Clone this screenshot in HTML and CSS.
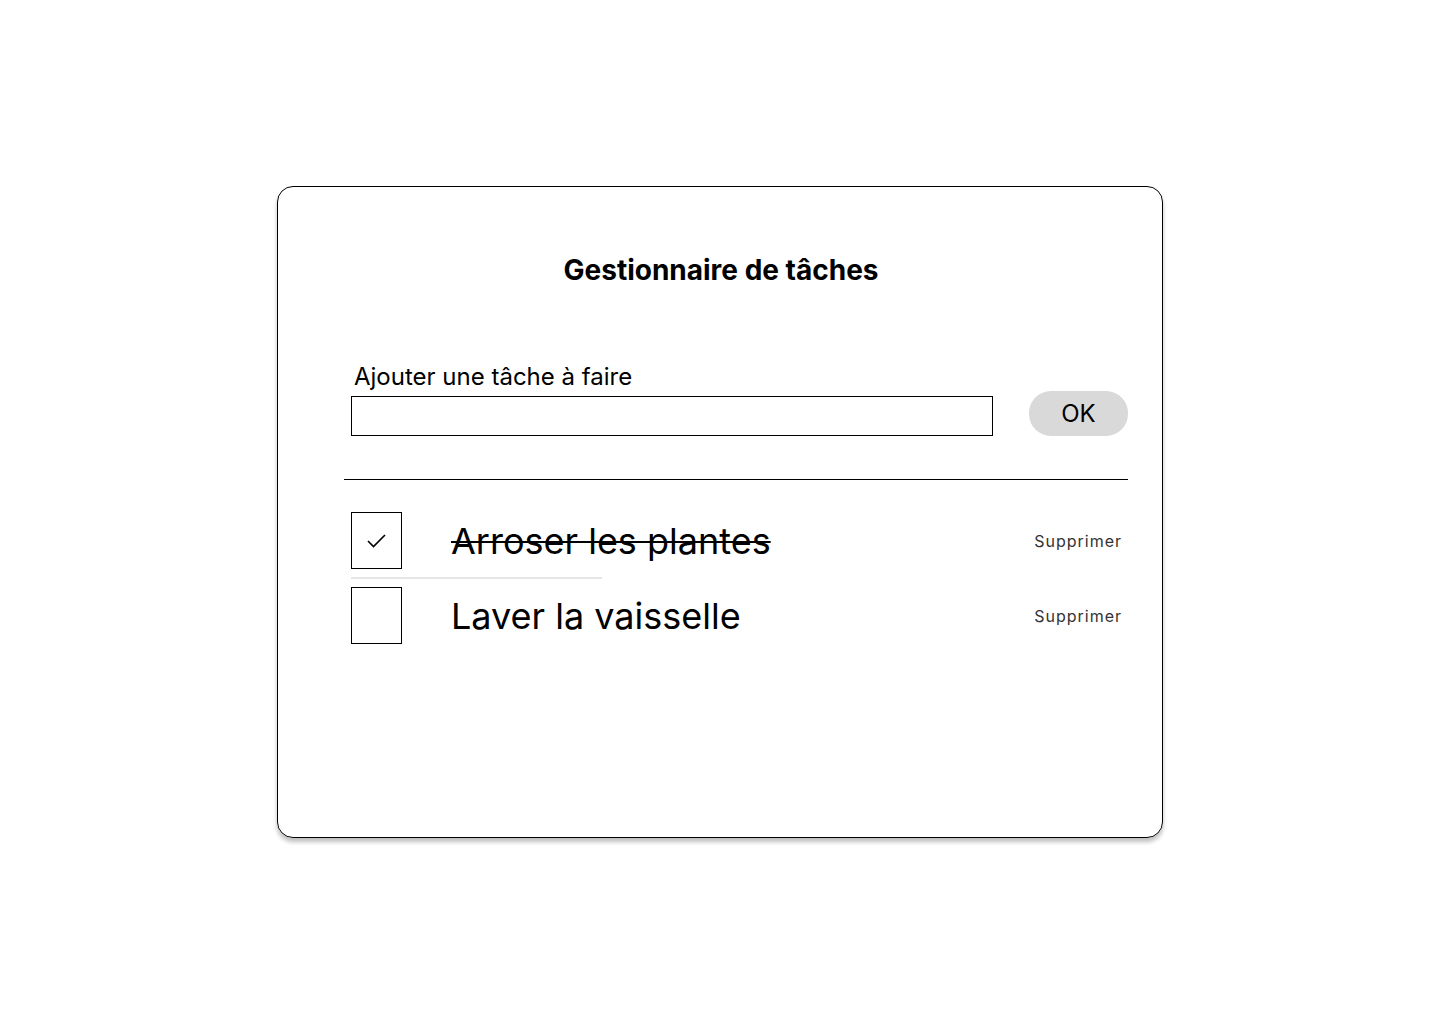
FILE: index.html
```html
<!DOCTYPE html>
<html lang="fr">
<head>
<meta charset="utf-8">
<title>Gestionnaire de tâches</title>
<link rel="stylesheet" href="styles.css">
</head>
<body>
<main class="card">
  <h1 class="title">Gestionnaire de tâches</h1>
  <form class="add-form">
    <div class="field">
      <label class="label" for="task">Ajouter une tâche à faire</label>
      <input class="input" id="task" type="text">
    </div>
    <button class="ok-btn" type="button">OK</button>
  </form>
  <hr class="divider">
  <ul class="tasks">
    <li class="task">
      <span class="check checked">
        <svg width="19" height="14" viewBox="0 0 19 14" fill="none"><path d="M1 7 L6.5 12.5 L18 1" stroke="#000" stroke-width="1.6"/></svg>
      </span>
      <span class="task-text done">Arroser les plantes</span>
      <span class="delete">Supprimer</span>
    </li>
    <li class="sep"></li>
    <li class="task">
      <span class="check"></span>
      <span class="task-text">Laver la vaisselle</span>
      <span class="delete">Supprimer</span>
    </li>
  </ul>
</main>
</body>
</html>
```

FILE: styles.css
```css
* { box-sizing: border-box; }
html, body { margin: 0; padding: 0; background: #fff; }
body {
  height: 100vh;
  display: flex;
  align-items: center;
  justify-content: center;
  font-family: Inter, "Noto Sans", sans-serif;
  color: #000;
}
.card {
  width: 886px;
  height: 652px;
  border: 1px solid #000;
  border-radius: 16px;
  box-shadow: 0 4px 4px rgba(0, 0, 0, 0.25);
  padding: 66px 33px 0 35px;
  display: flex;
  flex-direction: column;
}
.title {
  margin: 0;
  font-size: 28px;
  font-weight: 700;
  line-height: 34px;
  text-align: center;
}
.add-form {
  margin: 75px 0 0 38px;
  display: flex;
  align-items: flex-end;
  gap: 36px;
}
.field { display: flex; flex-direction: column; }
.label {
  font-size: 24px;
  line-height: 29px;
  margin: 0 0 5px 3px;
}
.input {
  width: 642px;
  height: 40px;
  border: 1px solid #000;
  border-radius: 0;
  margin: 0;
  padding: 0 8px;
  font: inherit;
  font-size: 20px;
}
.ok-btn {
  width: 99px;
  height: 45px;
  border: none;
  border-radius: 22px;
  background: #d9d9d9;
  font-family: inherit;
  font-size: 24px;
  color: #000;
  padding: 0;
  margin-bottom: 0;
}
.divider {
  margin: 43px 1px 0 31px;
  border: none;
  border-top: 1px solid #000;
  height: 0;
}
.tasks {
  list-style: none;
  margin: 32px 0 0 38px;
  padding: 0;
  display: flex;
  flex-direction: column;
}
.task {
  display: flex;
  align-items: center;
  height: 57px;
}
.check {
  width: 51px;
  height: 57px;
  border: 1px solid #000;
  display: flex;
  align-items: center;
  justify-content: center;
  flex: none;
}
.task-text {
  margin-left: 49px;
  font-size: 36px;
  line-height: 44px;
  flex: 1;
}
.task-text.done { text-decoration: line-through; text-decoration-thickness: 2px; }
.delete {
  font-size: 16px;
  letter-spacing: 1px;
  color: #333;
  margin-right: 7px;
}
.sep {
  width: 251px;
  height: 2px;
  background: #e6e6e6;
  margin: 8px 0 8px;
}
```
